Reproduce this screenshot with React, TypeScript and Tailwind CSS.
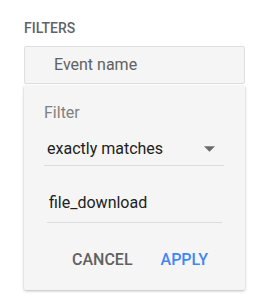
import React from "react";

const App = () => {
  return (
    <div
      className="w-[258px] h-[297px] bg-white pt-[18px] pl-[24px]"
      style={{ fontFamily: "Roboto, 'Liberation Sans', sans-serif" }}
    >
      <h3 className="text-[14px] leading-[20px] font-medium text-[#5f6368]">FILTERS</h3>
      <div className="mt-[8px] w-[221px] h-[38px] border border-[#dedede] bg-[#f5f5f5] rounded-[2px] flex items-center pl-[29px] text-[16px] leading-[24px] text-[#616161]">
        Event name
      </div>
      <div className="mt-[2px] w-[221px] h-[204px] bg-[#f5f5f5] rounded-b-[2px] shadow-[0_1px_3px_rgba(0,0,0,0.28)] px-[20px] pt-[15px]">
        <div className="text-[16px] leading-[24px] text-[#808080]">Filter</div>
        <div className="mt-[12px] w-[180px] flex items-center justify-between border-b border-[#dcdcdc] pl-[3px] pr-[9px] pb-[4px]">
          <span className="text-[16px] leading-[24px] text-[#212121]">exactly matches</span>
          <svg width="11" height="6" viewBox="0 0 10 5" className="block">
            <path d="M0 0 L10 0 L5 5 Z" fill="#6b6b6b" />
          </svg>
        </div>
        <div className="mt-[25px] ml-[3px] w-[175px] border-b border-[#dcdcdc] pl-[2px] pb-[7px] text-[16px] leading-[24px] text-[#212121]">
          file_download
        </div>
        <div className="mt-[25px] flex pl-[28px] gap-[28px] text-[16px] leading-[24px] font-medium">
          <span className="text-[#616161]">CANCEL</span>
          <span className="text-[#4285f4]">APPLY</span>
        </div>
      </div>
    </div>
  );
};

export default App;
